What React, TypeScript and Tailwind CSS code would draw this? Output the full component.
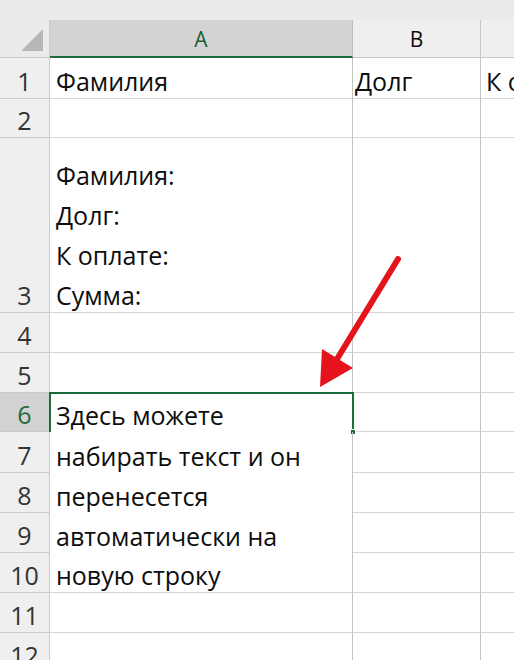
type Row = {
  n: string;
  h: string;
  a?: string[];
  b?: string;
  c?: string;
  sel?: boolean;
  noLine?: boolean;
};

const rows: Row[] = [
  { n: "1", h: "h-[41px]", a: ["Фамилия"], b: "Долг", c: "К оплате" },
  { n: "2", h: "h-[39px]" },
  { n: "3", h: "h-[175px]", a: ["Фамилия:", "Долг:", "К оплате:", "Сумма:"] },
  { n: "4", h: "h-[40px]" },
  { n: "5", h: "h-[40px]" },
  { n: "6", h: "h-[39px]", a: ["Здесь можете"], sel: true, noLine: true },
  { n: "7", h: "h-[41px]", a: ["набирать текст и он"], noLine: true },
  { n: "8", h: "h-[40px]", a: ["перенесется"], noLine: true },
  { n: "9", h: "h-[40px]", a: ["автоматически на"], noLine: true },
  { n: "10", h: "h-[40px]", a: ["новую строку"] },
  { n: "11", h: "h-[40px]" },
  { n: "12", h: "h-[40px]" },
];

const Arrow = () => (
  <svg className="absolute left-0 top-0 pointer-events-none" width="514" height="660">
    <line x1="398" y1="259" x2="334" y2="364" stroke="#e5141c" strokeWidth="6" strokeLinecap="round" />
    <polygon points="320,387 322,349 353,368" fill="#e5141c" />
  </svg>
);

export default function App() {
  return (
    <div
      className="relative w-[514px] h-[660px] overflow-hidden bg-white text-[25px] text-[#0d0d0d]"
      style={{ fontFamily: "'Open Sans', 'Noto Sans', sans-serif" }}
    >
      <div className="h-[20px] bg-[#ebebeb]" />
      <div className="grid grid-cols-[50px_303px_128px_1fr]">
        {/* column headers */}
        <div className="h-[38px] bg-[#ebebeb] border-r border-b border-[#c9c9c9] flex items-end justify-end pr-[6px] pb-[6px]">
          <div className="w-0 h-0 border-l-[22px] border-l-transparent border-b-[22px] border-b-[#b8b8b8]" />
        </div>
        <div className="h-[38px] bg-[#d3d3d3] border-r border-[#bdbdbd] border-b-2 border-b-[#1e6b3c] flex items-center justify-center text-[21px] text-[#1e5c36] pt-[3px]">
          A
        </div>
        <div className="h-[38px] bg-[#efefef] border-r border-b border-[#c6c6c6] flex items-center justify-center text-[21px] pt-[3px]">
          B
        </div>
        <div className="h-[38px] bg-[#efefef] border-b border-[#c6c6c6]" />

        {rows.map((r) => (
          <div key={r.n} className="contents">
            <div
              className={`${r.h} border-r border-b border-[#cacaca] flex items-end justify-center leading-[40px] ${
                r.sel ? "bg-[#d2d2d2] text-[#1e6b3c]" : "bg-[#efefef] text-[#333]"
              }`}
            >
              <span className="translate-y-[3px]">{r.n}</span>
            </div>
            <div
              className={`${r.h} relative border-r border-[#c4c4c4] flex flex-col justify-end pl-[6px] leading-[40px] ${
                r.noLine ? "" : "border-b border-b-[#d6d6d6]"
              }`}
            >
              <div className="translate-y-[3px]">
                {r.a?.map((t) => (
                  <div key={t} className="whitespace-nowrap">
                    {t}
                  </div>
                ))}
              </div>
              {r.sel && (
                <>
                  <div className="absolute -left-[1px] -top-[1px] -right-[2px] bottom-0 border-2 border-b-0 border-[#1e6b3c]" />
                  <div className="absolute -right-[4px] -bottom-[3px] w-[6px] h-[6px] bg-[#1e6b3c] border border-white" />
                </>
              )}
            </div>
            <div className={`${r.h} border-r border-b border-[#c4c4c4] border-b-[#d6d6d6] flex items-end pl-[2px] leading-[40px]`}>
              <span className="translate-y-[3px]">{r.b}</span>
            </div>
            <div className={`${r.h} border-b border-[#d6d6d6] flex items-end pl-[5px] leading-[40px] whitespace-nowrap`}>
              <span className="translate-y-[3px]">{r.c}</span>
            </div>
          </div>
        ))}
      </div>
      <Arrow />
    </div>
  );
}
